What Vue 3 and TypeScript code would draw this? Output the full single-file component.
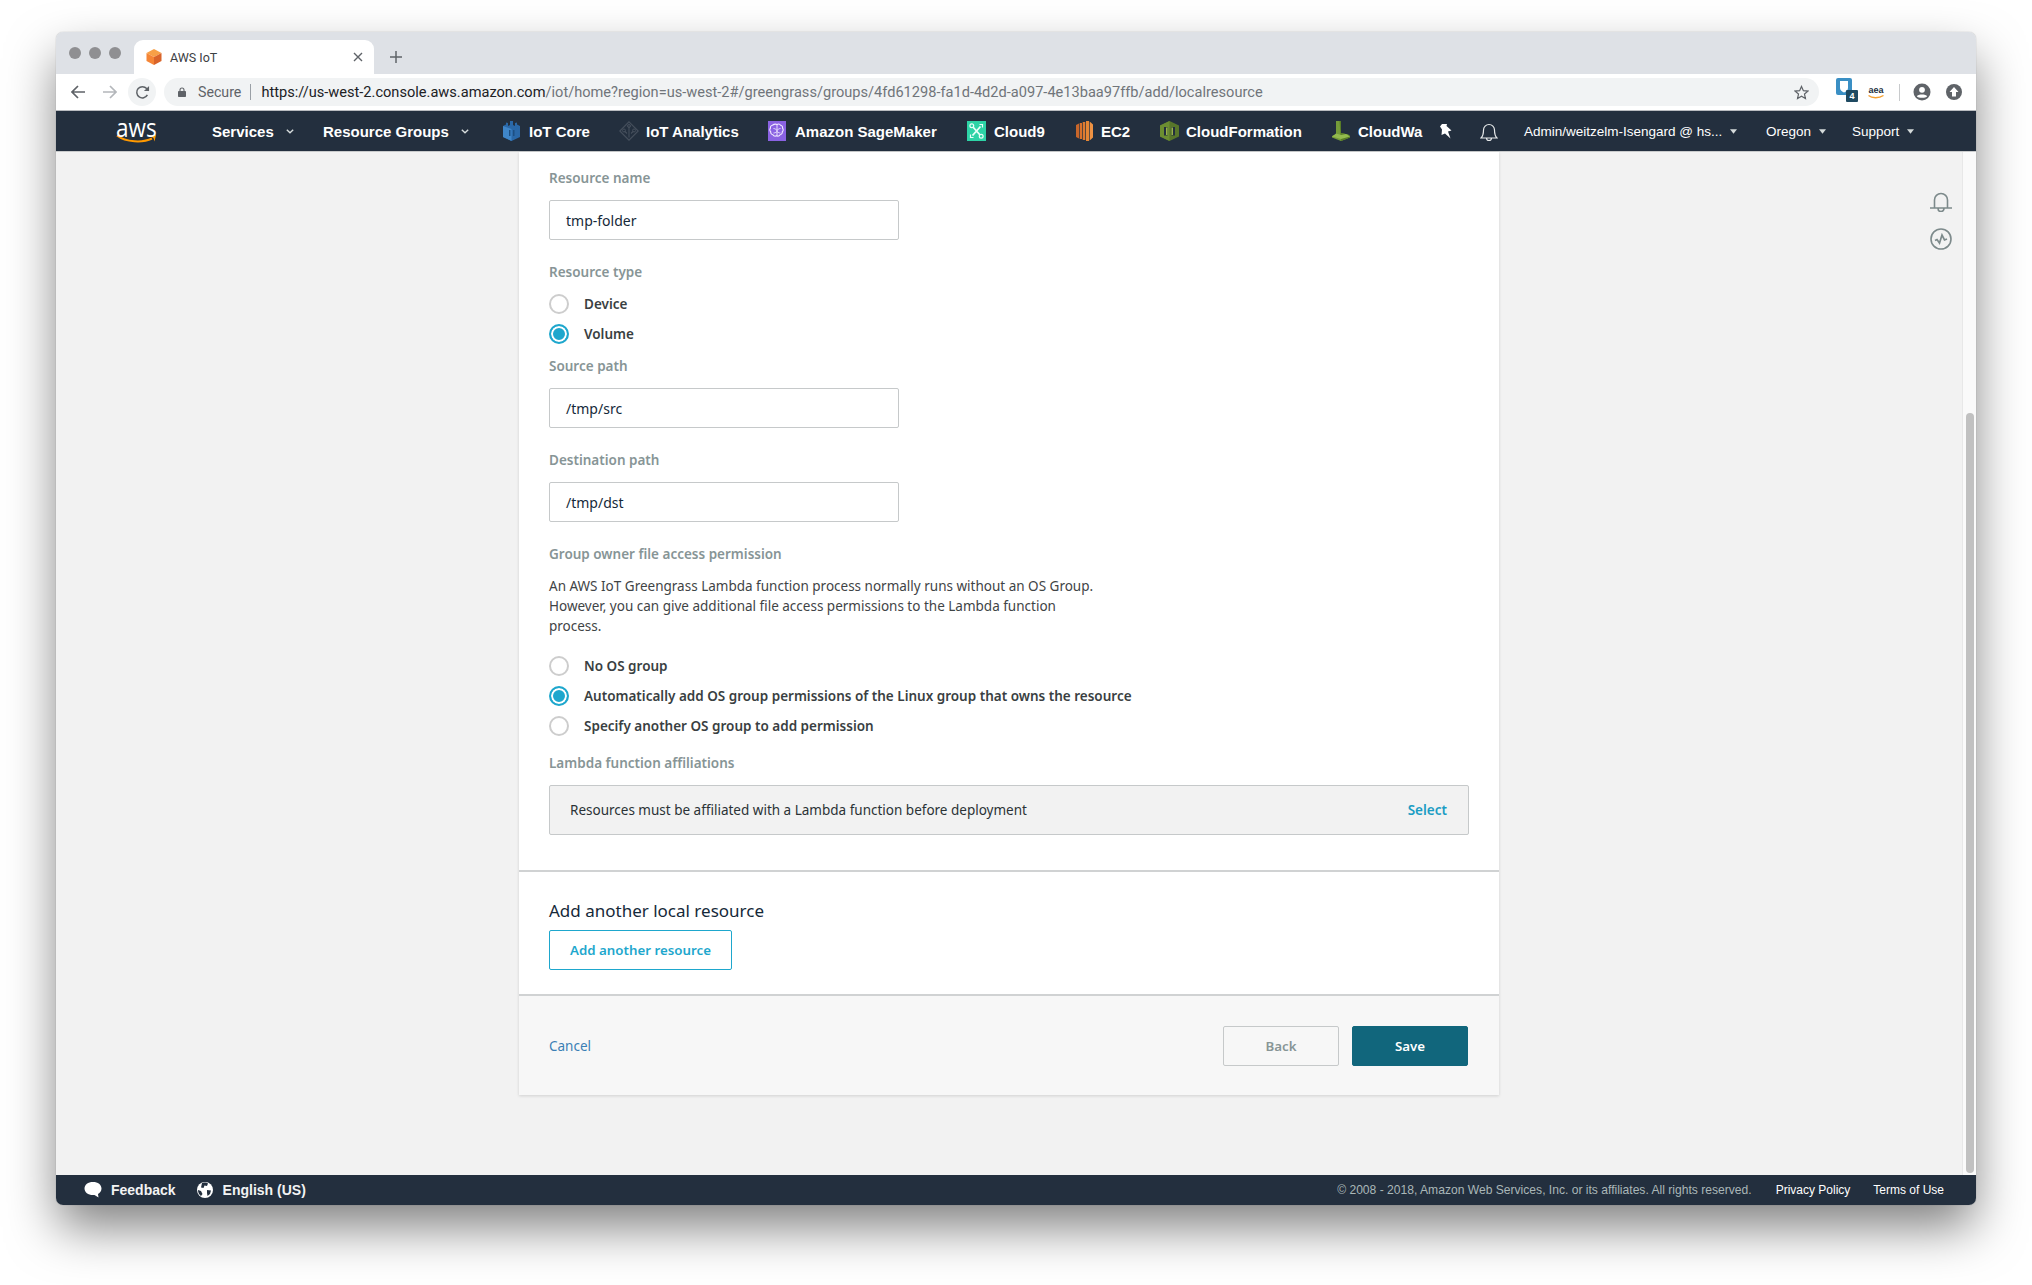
<script setup lang="ts">
interface NavItem { label: string; width: number; icon?: string; slot?: number; caret?: boolean }
const navItems: NavItem[] = [
  { label: 'Services', width: 111, caret: true },
  { label: 'Resource Groups', width: 180, caret: true },
  { label: 'IoT Core', width: 116, icon: 'iot', slot: 26 },
  { label: 'IoT Analytics', width: 149, icon: 'analytics', slot: 27 },
  { label: 'Amazon SageMaker', width: 199, icon: 'sage', slot: 27 },
  { label: 'Cloud9', width: 109, icon: 'c9', slot: 27 },
  { label: 'EC2', width: 84, icon: 'ec2', slot: 25 },
  { label: 'CloudFormation', width: 172, icon: 'cfn', slot: 26 },
  { label: 'CloudWa', width: 107, icon: 'cw', slot: 26 }
]
const accountItems = [
  { label: 'Admin/weitzelm-Isengard @ hs...', width: 242 },
  { label: 'Oregon', width: 86 },
  { label: 'Support', width: 72 }
]
const typeOptions = [
  { label: 'Device', on: false },
  { label: 'Volume', on: true }
]
const groupOptions = [
  { label: 'No OS group', on: false },
  { label: 'Automatically add OS group permissions of the Linux group that owns the resource', on: true },
  { label: 'Specify another OS group to add permission', on: false }
]
</script>

<template>
  <div class="page">
    <div class="window">
      <div class="tabstrip">
        <div class="lights"><i></i><i></i><i></i></div>
        <div class="tab">
          <svg class="favicon" viewBox="0 0 16 16" width="16" height="16">
            <path d="M8 0 15.500 4 8 8 .5 4z" fill="#f7a047" />
            <path d="M.5 4 8 8v8L.5 12z" fill="#f58536" />
            <path d="M15.500 4 8 8v8l7.500-4z" fill="#d9642a" />
          </svg>
          <span class="tab-title">AWS IoT</span>
          <svg class="tab-close" viewBox="0 0 10 10" width="10" height="10">
            <path d="M1 1l8 8M9 1l-8 8" stroke="#5f6368" stroke-width="1.400" fill="none" />
          </svg>
        </div>
        <svg class="newtab" viewBox="0 0 12 12" width="12" height="12">
          <path d="M6 0v12M0 6h12" stroke="#5f6368" stroke-width="1.500" fill="none" />
        </svg>
      </div>

      <div class="toolbar">
        <svg class="tb-back" viewBox="0 0 14 14" width="14" height="14">
          <path d="M14 7H1.500M7 1 1 7l6 6" stroke="#5f6368" stroke-width="1.700" fill="none" />
        </svg>
        <svg class="tb-fwd" viewBox="0 0 14 14" width="14" height="14">
          <path d="M0 7h12.500M7 1l6 6-6 6" stroke="#b4b7bb" stroke-width="1.700" fill="none" />
        </svg>
        <div class="tb-reload">
          <svg viewBox="0 0 16 16" width="15" height="15">
            <path d="M13.200 10.500A6 6 0 1 1 12.400 3.800L14.500 6" stroke="#5f6368" stroke-width="1.600" fill="none" />
            <path d="M15 1v5.500H9.500z" fill="#5f6368" />
          </svg>
        </div>
        <div class="omnibox">
          <svg class="lock" viewBox="0 0 8 10" width="8" height="10">
            <path d="M2 4.500V3a2 2 0 0 1 4 0v1.500" stroke="#5f6368" stroke-width="1.100" fill="none" />
            <rect x="0" y="4" width="8" height="6" rx=".8" fill="#5f6368" />
          </svg>
          <span class="secure">Secure</span>
          <span class="omni-sep"></span>
          <span class="url"><span class="url-host">https://us-west-2.console.aws.amazon.com</span>/iot/home?region=us-west-2#/greengrass/groups/4fd61298-fa1d-4d2d-a097-4e13baa97ffb/add/localresource</span>
          <svg class="star" viewBox="0 0 16 16" width="15" height="15">
            <path d="M8 1.500 10 6l4.800.5-3.600 3.200 1 4.800L8 12l-4.200 2.500 1-4.800L1.200 6.500 6 6z" stroke="#5f6368" stroke-width="1.300" fill="none" />
          </svg>
        </div>
        <div class="ext-shield">
          <svg viewBox="0 0 16 17" width="16" height="17">
            <rect width="16" height="17" rx="2" fill="#3a8fc4" />
            <path d="M4 3h8v7c0 2-2 3.500-4 4.500C6 13.500 4 12 4 10z" fill="#fff" />
          </svg>
          <span class="ext-badge">4</span>
        </div>
        <div class="ext-aea">
          <span>aea</span>
          <svg viewBox="0 0 16 4" width="16" height="4">
            <path d="M.5.500C4 3.500 11 3.500 15.500.500" stroke="#f5a030" stroke-width="1.300" fill="none" />
          </svg>
        </div>
        <span class="tb-sep"></span>
        <svg class="tb-acct" viewBox="0 0 18 18" width="18" height="18">
          <circle cx="9" cy="9" r="8.500" fill="#5f6368" />
          <circle cx="9" cy="6.800" r="2.900" fill="#fff" />
          <path d="M3.800 13.200C5 10.800 13 10.800 14.200 13.200 12.500 15.200 5.500 15.200 3.800 13.200z" fill="#fff" />
        </svg>
        <svg class="tb-up" viewBox="0 0 16 16" width="16" height="16">
          <circle cx="8" cy="8" r="8" fill="#5f6368" />
          <path d="M8 3l4.500 5H10v4.500H6V8H3.500z" fill="#fff" />
        </svg>
      </div>

      <nav class="awsnav">
        <div class="logo">
          <span class="logo-text">aws</span>
          <svg class="logo-smile" viewBox="0 0 41 10" width="41" height="10">
            <path d="M1 1.500C10 8.500 27 9 36 4.500" stroke="#f90" stroke-width="2" fill="none" />
            <path d="M33 1.500 40 1l-1.500 6.500-1-3.500z" fill="#f90" />
          </svg>
        </div>
        <div v-for="item in navItems" :key="item.label" class="nav-item" :style="{ width: item.width + 'px' }">
          <span v-if="item.icon" class="nav-icon" :style="{ width: item.slot + 'px' }">
            <svg v-if="item.icon === 'iot'" viewBox="0 0 17 20" width="17" height="20">
              <path d="M0 5 3 3.500V1.500L5 2v3l2-1V0h3v4l2 1V2l2-.5v2L17 5v11l-8.500 4L0 16z" fill="#2a68a8" />
              <path d="M8.500 8v12L0 16V5z" fill="#3f86c9" />
              <path d="M6 9h1.500v6H6zM10 9h1.500v6H10z" fill="#1d4f82" />
            </svg>
            <svg v-else-if="item.icon === 'analytics'" viewBox="0 0 20 20" width="20" height="20">
              <path d="M10 .8 19.200 10 10 19.200 .8 10z" stroke="#454f5c" stroke-width="1.200" fill="none" />
              <path d="M10 4.500v12M5.500 10 8 12.500M14.500 10 12 12.500" stroke="#454f5c" stroke-width="1.100" fill="none" />
              <circle cx="10" cy="5" r="1.500" stroke="#454f5c" fill="none" />
              <circle cx="5" cy="9.500" r="1.500" stroke="#454f5c" fill="none" />
              <circle cx="15" cy="9.500" r="1.500" stroke="#454f5c" fill="none" />
            </svg>
            <svg v-else-if="item.icon === 'sage'" viewBox="0 0 18 20" width="18" height="20">
              <rect width="18" height="20" fill="#8a62e2" />
              <path d="M9 3.500c1.500-.8 3-.3 3.600.8 1.400.2 2.300 1.500 1.900 2.900 1 1 .9 2.800-.2 3.600.2 1.500-.8 2.800-2.200 2.900-.6 1.300-2.200 1.900-3.600 1.100-1.400.8-3 .2-3.600-1.100-1.400-.1-2.400-1.400-2.200-2.900-1.100-.8-1.200-2.600-.2-3.600-.4-1.400.5-2.700 1.900-2.900C5.900 3.200 7.500 2.700 9 3.500z" stroke="#f1e9ff" stroke-width="1.100" fill="none" />
              <path d="M9 3.500v11.400M5.500 7.500c1.500 0 2.500 1 3.500 2M12.500 7.500c-1.500 0-2.500 1-3.500 2M5.500 12c1 0 2.500-.5 3.500-1.500M12.500 12c-1 0-2.500-.5-3.500-1.500" stroke="#f1e9ff" stroke-width=".9" fill="none" />
            </svg>
            <svg v-else-if="item.icon === 'c9'" viewBox="0 0 19 20" width="19" height="20">
              <rect width="19" height="20" fill="#2dd3a6" />
              <path d="M5.500 5.500 13.500 14.500M13.500 5.500 5.500 14.500" stroke="#e9fff8" stroke-width="1.800" fill="none" />
              <circle cx="4.800" cy="4.800" r="1.900" stroke="#e9fff8" stroke-width="1.200" fill="#2dd3a6" />
              <circle cx="14.200" cy="15.200" r="1.900" stroke="#e9fff8" stroke-width="1.200" fill="#2dd3a6" />
              <path d="M12.500 3.500h3v3M3.500 13.500v3h3" stroke="#e9fff8" stroke-width="1.200" fill="none" />
            </svg>
            <svg v-else-if="item.icon === 'ec2'" viewBox="0 0 17 20" width="17" height="20">
              <path d="M0 4 3 2.500v15L0 16z" fill="#c8662a" />
              <path d="M3.700 2h2.300v16H3.700z" fill="#d9722c" />
              <path d="M6.700 1h2.600v18H6.700z" fill="#de7a30" />
              <path d="M10 0h3v20h-3z" fill="#e58635" />
              <path d="M13.700 .6 17 3.500v13l-3.300 2.900z" fill="#ee9243" />
            </svg>
            <svg v-else-if="item.icon === 'cfn'" viewBox="0 0 19 20" width="19" height="20">
              <path d="M9.500 0 19 4.500v11L9.500 20 0 15.500v-11z" fill="#58762b" />
              <path d="M9.500 0 0 4.500v11L9.500 20z" fill="#6c8e31" />
              <path d="M4 6h3.500v8.500H4zM11.500 6H15v8.500h-3.500z" fill="#232f3e" />
              <path d="M6 6.500h1.500v7.500H6zM11.500 6.500H13v7.500h-1.500z" fill="#9ab34a" />
            </svg>
            <svg v-else viewBox="0 0 18 20" width="18" height="20">
              <path d="M4 0h5v12l7 1.500L18 15v1.500L9 20 0 16.500V15l4-1.500z" fill="#759c39" />
              <path d="M7.500 0H9v12l7 1.500L18 15v1.500L9 20z" fill="#587c27" />
              <path d="M4 12.500 9 14l5-1 4 2.500L9 18 0 15.500z" fill="#93ba4e" />
            </svg>
          </span>
          <span class="nav-label">{{ item.label }}</span>
          <svg v-if="item.caret" class="caret" viewBox="0 0 8 5" width="8" height="5">
            <path d="M.8.800 4 3.800 7.200.800" stroke="#d5dbdb" stroke-width="1.400" fill="none" />
          </svg>
        </div>
        <div class="nav-pin">
          <svg viewBox="0 0 13 15" width="13" height="15">
            <path d="M3 0h5l-.5 2 5 4.500-3.500 1 2.500 7L6 9.500 2.500 11 3 5.500 1 2.500z" fill="#fff" />
          </svg>
        </div>
        <div class="nav-bell">
          <svg viewBox="0 0 18 20" width="18" height="20">
            <path d="M1 16c2-2 2.500-3.500 2.500-8a5.500 5.500 0 0 1 11 0c0 4.500.5 6 2.500 8zM6.500 16a2.500 2.500 0 0 0 5 0" stroke="#e6e9ea" stroke-width="1.200" fill="none" />
          </svg>
        </div>
        <div v-for="item in accountItems" :key="item.label" class="acct-item" :style="{ width: item.width + 'px' }">
          <span class="acct-label">{{ item.label }}</span>
          <svg class="caret-small" viewBox="0 0 8 5" width="7" height="5">
            <path d="M0 0h8L4 5z" fill="#d5dbdb" />
          </svg>
        </div>
      </nav>

      <div class="content">
        <main class="main">
          <section class="card">
            <div class="form">
              <div class="label">Resource name</div>
              <div class="input">tmp-folder</div>

              <div class="label label-after-input">Resource type</div>
              <div class="radios radios-type">
                <div v-for="o in typeOptions" :key="o.label" class="radio-row">
                  <span class="radio" :class="{ on: o.on }"></span>
                  <span class="radio-text">{{ o.label }}</span>
                </div>
              </div>

              <div class="label label-after-radio">Source path</div>
              <div class="input">/tmp/src</div>

              <div class="label label-after-input">Destination path</div>
              <div class="input">/tmp/dst</div>

              <div class="label label-after-input">Group owner file access permission</div>
              <p class="desc">An AWS IoT Greengrass Lambda function process normally runs without an OS Group.<br />However, you can give additional file access permissions to the Lambda function<br />process.</p>
              <div class="radios radios-group">
                <div v-for="o in groupOptions" :key="o.label" class="radio-row">
                  <span class="radio" :class="{ on: o.on }"></span>
                  <span class="radio-text">{{ o.label }}</span>
                </div>
              </div>

              <div class="label label-lambda">Lambda function affiliations</div>
              <div class="affil">
                <span>Resources must be affiliated with a Lambda function before deployment</span>
                <a class="affil-select">Select</a>
              </div>
            </div>

            <div class="another">
              <h2 class="another-title">Add another local resource</h2>
              <button class="btn-outline">Add another resource</button>
            </div>

            <div class="card-foot">
              <a class="cancel">Cancel</a>
              <div class="foot-btns">
                <button class="btn-back">Back</button>
                <button class="btn-save">Save</button>
              </div>
            </div>
          </section>

          <div class="rail">
            <svg viewBox="0 0 22 20" width="22" height="20">
              <path d="M4.500 16V8a6.500 6.500 0 0 1 13 0v8M0 16h22M8 16.500a3 3 0 0 0 6 0" stroke="#7d8a8b" stroke-width="1.600" fill="none" />
            </svg>
            <svg viewBox="0 0 22 22" width="22" height="22">
              <circle cx="11" cy="11" r="10" stroke="#7d8a8b" stroke-width="1.600" fill="none" />
              <path d="M5 12.500l2-1 2.500 3.500 2.500-8 2.500 5 2.500-1" stroke="#7d8a8b" stroke-width="1.700" fill="none" />
            </svg>
          </div>
        </main>
        <div class="scrollbar"><span class="thumb"></span></div>
      </div>

      <footer class="foot">
        <svg class="foot-chat" viewBox="0 0 18 16" width="18" height="16">
          <path d="M9 0c5 0 8.500 2.700 8.500 6.500 0 2.500-1.500 4.500-3.500 5.500l.5 3.500L10.500 13H9C4 13 .5 10.300.5 6.500S4 0 9 0z" fill="#fff" />
        </svg>
        <span class="foot-strong foot-feedback">Feedback</span>
        <svg class="foot-globe" viewBox="0 0 16 16" width="16" height="16">
          <circle cx="8" cy="8" r="8" fill="#fff" />
          <path d="M5 1c2-1 4.500-.5 6 .5L10 4 7.500 3.500 6.500 6 4 5.500zM10 8l4 .5-1 3.500-2.500 2L10 11zM1 8l3 1 1.500 3L4 14C2 12.500 1 10.500 1 8z" fill="#232f3e" />
        </svg>
        <span class="foot-strong foot-lang">English (US)</span>
        <span class="foot-copy">© 2008 - 2018, Amazon Web Services, Inc. or its affiliates. All rights reserved.</span>
        <a class="foot-link foot-privacy">Privacy Policy</a>
        <a class="foot-link foot-terms">Terms of Use</a>
      </footer>
    </div>
  </div>
</template>

<style>
html, body { margin: 0; background: #fff; }
</style>

<style scoped>
.page {
  width: 2032px;
  height: 1285px;
  box-sizing: border-box;
  padding: 32px 56px 80px;
  background: #fff;
  overflow: hidden;
  font-family: "Noto Sans", sans-serif;
}
.window {
  height: 100%;
  display: flex;
  flex-direction: column;
  border-radius: 7px;
  overflow: hidden;
  box-shadow: 0 24px 50px -2px rgba(0, 0, 0, .5), 0 0 1px rgba(0, 0, 0, .4);
}

/* Chrome */
.tabstrip {
  height: 42px;
  flex: none;
  display: flex;
  align-items: flex-end;
  background: #dee1e6;
}
.lights { display: flex; gap: 8px; margin: 0 0 15px 13px; width: 65px; flex: none; }
.lights i { width: 12px; height: 12px; border-radius: 50%; background: #8f8f92; }
.tab {
  width: 240px;
  height: 34px;
  flex: none;
  display: flex;
  align-items: center;
  background: #fff;
  border-radius: 9px 9px 0 0;
}
.favicon { margin-left: 12px; flex: none; }
.tab-title { margin-left: 8px; font: 12.5px Roboto, sans-serif; color: #3c4043; flex: 1; }
.tab-close { margin-right: 11px; flex: none; }
.newtab { margin: 0 0 11px 16px; flex: none; }

.toolbar {
  height: 37px;
  flex: none;
  box-sizing: border-box;
  display: flex;
  align-items: center;
  background: #fff;
  border-bottom: 1px solid #b9bcc0;
}
.tb-back { margin-left: 15px; flex: none; }
.tb-fwd { margin-left: 18px; flex: none; }
.tb-reload {
  width: 28px;
  height: 28px;
  margin-left: 11px;
  flex: none;
  border-radius: 50%;
  background: #f1f3f4;
  display: flex;
  align-items: center;
  justify-content: center;
}
.omnibox {
  margin-left: 8px;
  flex: 1;
  min-width: 0;
  height: 28px;
  box-sizing: border-box;
  border-radius: 14px;
  background: #f1f3f4;
  display: flex;
  align-items: center;
  padding-left: 14px;
}
.lock { flex: none; }
.secure { margin-left: 12px; font: 14.2px Roboto, sans-serif; color: #5f6368; }
.omni-sep { width: 1px; height: 16px; margin: 0 10px 0 9px; background: #9aa0a6; }
.url { font: 14.6px Roboto, sans-serif; color: #70757a; white-space: nowrap; flex: 1; overflow: hidden; }
.url-host { color: #202124; }
.star { margin-right: 10px; flex: none; }
.ext-shield { position: relative; width: 22px; height: 22px; margin-left: 17px; flex: none; }
.ext-shield svg { display: block; margin-top: -3px; }
.ext-badge {
  position: absolute;
  left: 10px;
  top: 9px;
  width: 12px;
  height: 12px;
  background: #1f4a62;
  border-radius: 1px;
  color: #fff;
  font: bold 9px/12px "Liberation Sans", sans-serif;
  text-align: center;
}
.ext-aea {
  margin-left: 10px;
  width: 16px;
  flex: none;
  display: flex;
  flex-direction: column;
  align-items: center;
}
.ext-aea span { font: bold 9px/9px "Liberation Sans", sans-serif; color: #232f3e; }
.ext-aea svg { display: block; }
.tb-sep { width: 1px; height: 17px; margin-left: 15px; background: #c8cacc; flex: none; }
.tb-acct { margin-left: 13px; flex: none; }
.tb-up { margin-left: 15px; margin-right: 14px; flex: none; }

/* AWS nav */
.awsnav {
  height: 41px;
  flex: none;
  display: flex;
  align-items: center;
  padding: 0 0 0 60px;
  background: #232f3e;
  color: #fff;
  overflow: hidden;
  border-bottom: 1px solid #c9cbcc;
  box-sizing: border-box;
}
.logo { width: 96px; flex: none; height: 24px; margin-top: -1px; }
.logo-text {
  display: block;
  font: 25px/17px "Open Sans", sans-serif;
  color: #fff;
  transform: scaleX(.9);
  transform-origin: left center;
}
.logo-smile { display: block; margin-top: -2px; }
.nav-item {
  flex: none;
  display: flex;
  align-items: center;
  height: 100%;
  font: bold 15px "Liberation Sans", sans-serif;
  white-space: nowrap;
}
.nav-icon { display: flex; align-items: center; flex: none; }
.nav-label { color: #fff; }
.caret { margin-left: 12px; }
.nav-pin { width: 41px; flex: none; display: flex; }
.nav-bell { width: 44px; flex: none; display: flex; margin-top: 1px; }
.acct-item {
  flex: none;
  display: flex;
  align-items: center;
  font: 13.5px "Liberation Sans", sans-serif;
  color: #fff;
  white-space: nowrap;
}
.caret-small { margin-left: 8px; }

/* Content */
.content { flex: 1; min-height: 0; display: flex; background: #f2f2f2; }
.main { flex: 1; position: relative; display: flex; justify-content: center; align-items: flex-start; }
.card {
  width: 980px;
  background: #fff;
  box-shadow: 0 1px 3px rgba(0, 0, 0, .14);
}
.form { padding: 16px 30px 35px 30px; }
.label {
  font-size: 13.5px;
  line-height: 20px;
  font-weight: 600;
  color: #879596;
}
.label-after-input { margin-top: 22px; }
.label-after-radio { margin-top: 7px; }
.label-lambda { margin-top: 12px; }
.input {
  width: 350px;
  height: 40px;
  margin-top: 12px;
  box-sizing: border-box;
  border: 1px solid #c6c9ca;
  border-radius: 2px;
  padding-left: 16px;
  background: #fff;
  font-size: 14px;
  line-height: 39px;
  color: #152939;
}
.radios-type { margin-top: 7px; }
.radios-group { margin-top: 15px; }
.radio-row { height: 30px; display: flex; align-items: center; }
.radio {
  width: 20px;
  height: 20px;
  flex: none;
  box-sizing: border-box;
  border: 2px solid #cdcdcd;
  border-radius: 50%;
  background: #fff;
}
.radio.on {
  border-color: #1ea7cd;
  background: #1ea7cd;
  box-shadow: inset 0 0 0 2px #fff;
}
.radio-text {
  margin-left: 15px;
  font-size: 13.5px;
  font-weight: 600;
  color: #3a3f42;
}
.desc {
  margin: 12px 0 0;
  font-size: 13.5px;
  line-height: 20px;
  color: #3f4446;
}
.affil {
  height: 50px;
  margin-top: 12px;
  box-sizing: border-box;
  border: 1px solid #c6c9ca;
  border-radius: 2px;
  background: #f2f2f2;
  padding: 0 21px 1px 20px;
  display: flex;
  align-items: center;
  justify-content: space-between;
  font-size: 13.5px;
  color: #2b3236;
}
.affil-select { font-weight: 600; color: #1b9dc4; }
.another {
  height: 126px;
  box-sizing: border-box;
  border-top: 2px solid #d0d2d3;
  border-bottom: 2px solid #d0d2d3;
  padding: 27px 30px 0;
}
.another-title {
  margin: 0;
  font-size: 17px;
  line-height: 24px;
  font-weight: 400;
  color: #152939;
}
.btn-outline {
  display: block;
  width: 183px;
  height: 40px;
  margin-top: 7px;
  padding: 0;
  box-sizing: border-box;
  border: 1px solid #1ea7cd;
  border-radius: 2px;
  background: #fff;
  font: 600 13.3px "Noto Sans", sans-serif;
  color: #1ea7cd;
}
.card-foot {
  height: 99px;
  box-sizing: border-box;
  padding: 0 31px 0 30px;
  background: #f7f7f7;
  display: flex;
  align-items: center;
  justify-content: space-between;
}
.cancel { font-size: 13.5px; color: #3b7fb5; }
.foot-btns { display: flex; gap: 13px; }
.btn-back, .btn-save {
  width: 116px;
  height: 40px;
  padding: 0;
  box-sizing: border-box;
  border-radius: 2px;
  font: 600 13.3px "Noto Sans", sans-serif;
}
.btn-back { background: #f7f7f7; border: 1px solid #c6c9ca; color: #879596; }
.btn-save { background: #11667c; border: 1px solid #11667c; color: #fff; }
.rail {
  position: absolute;
  right: 10px;
  top: 40px;
  display: flex;
  flex-direction: column;
  gap: 16px;
}
.rail svg { display: block; }
.scrollbar {
  width: 14px;
  flex: none;
  box-sizing: border-box;
  background: #fafafa;
  border-left: 1px solid #e8e8e8;
  padding: 261px 2px 2px 2px;
}
.thumb { display: block; height: 100%; width: 8px; margin-left: 1px; background: #c1c1c1; border-radius: 4px; }

/* Footer */
.foot {
  height: 30px;
  flex: none;
  display: flex;
  align-items: center;
  background: #232f3e;
  padding-left: 28px;
  font: 14px "Liberation Sans", sans-serif;
  color: #fff;
  white-space: nowrap;
}
.foot-strong { font-weight: 700; color: #f2f3f3; }
.foot-feedback { margin-left: 9px; }
.foot-globe { margin-left: 21px; }
.foot-lang { margin-left: 10px; }
.foot-copy { margin-left: auto; font-size: 12.1px; color: #aab7b8; }
.foot-link { font-size: 12px; color: #fff; }
.foot-privacy { margin-left: 24px; }
.foot-terms { margin-left: 23px; margin-right: 32px; }
</style>
